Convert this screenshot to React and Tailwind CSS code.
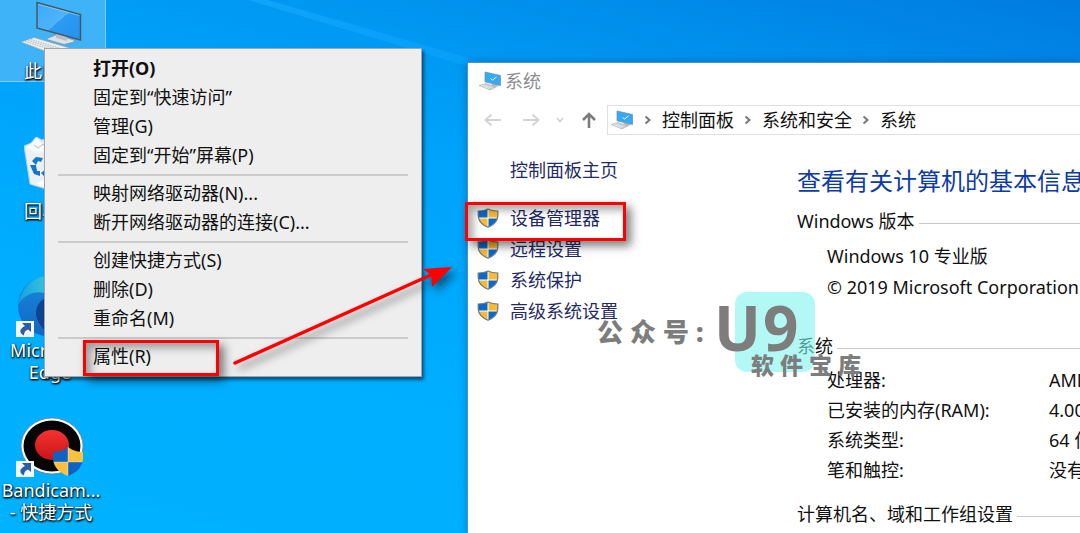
import React from "react";

const MENU = [
  ["打开(O)", "固定到“快速访问”", "管理(G)", "固定到“开始”屏幕(P)"],
  ["映射网络驱动器(N)...", "断开网络驱动器的连接(C)..."],
  ["创建快捷方式(S)", "删除(D)", "重命名(M)"],
  ["属性(R)"],
];

const TASKS = ["设备管理器", "远程设置", "系统保护", "高级系统设置"];

const SPECS = [
  ["处理器:", "AMD Ryzen"],
  ["已安装的内存(RAM):", "4.00 GB"],
  ["系统类型:", "64 位操作系统"],
  ["笔和触控:", "没有可用于此显示器的笔或触控输入"],
];

function Shield({ className }) {
  return (
    <svg viewBox="0 0 22 20" preserveAspectRatio="none" className={className} aria-hidden="true">
      <defs>
        <clipPath id="shield-shape">
          <path d="M11 1C8 2.600 4.500 3 1.200 3V8C1.500 13.500 5.500 17 11 19.200C16.500 17 20.500 13.500 20.800 8V3C17.500 3 14 2.600 11 1Z" />
        </clipPath>
      </defs>
      <g clipPath="url(#shield-shape)">
        <rect width="11" height="10" fill="#0a69c9" />
        <rect x="11" width="11" height="10" fill="#fdb932" />
        <rect y="10" width="11" height="10" fill="#fdb932" />
        <rect x="11" y="10" width="11" height="10" fill="#0a69c9" />
        <path d="M11 0V20M0 10H22" stroke="#fff" strokeWidth="1" />
      </g>
      <path d="M11 1C8 2.600 4.500 3 1.200 3V8C1.500 13.500 5.500 17 11 19.200C16.500 17 20.500 13.500 20.800 8V3C17.500 3 14 2.600 11 1Z" fill="none" stroke="#6d7a80" strokeWidth="1.200" />
    </svg>
  );
}

function LargeShield({ className }) {
  return (
    <svg viewBox="0 0 32 30" className={className} aria-hidden="true">
      <defs>
        <clipPath id="large-shield-shape">
          <path d="M16 0C11 4 6 5 1 5V12C2 21 8 26 16 29C24 26 30 21 31 12V5C26 5 21 4 16 0Z" />
        </clipPath>
      </defs>
      <g clipPath="url(#large-shield-shape)">
        <rect width="16" height="15" fill="#0f62c4" />
        <rect x="16" width="16" height="15" fill="#fcc13f" />
        <rect y="15" width="16" height="15" fill="#fcc13f" />
        <rect x="16" y="15" width="16" height="15" fill="#0f62c4" />
        <path d="M16 0V30M0 15H32" stroke="#fff" strokeOpacity="0.500" strokeWidth="0.700" />
      </g>
    </svg>
  );
}

function SmallComputer({ className }) {
  return (
    <svg viewBox="0 0 24 20" className={className} aria-hidden="true">
      <path d="M1 14.500L8 12.500L18 16L12 19Z" fill="#c9ced3" stroke="#a9b0b6" strokeWidth="0.600" />
      <path d="M3 14.500L11 17.500M5 13.800L13.500 16.800" stroke="#eef1f3" strokeWidth="0.700" />
      <path d="M13 13L17 12.500L21 15L16 16.500Z" fill="#b4bac0" />
      <path d="M7 1L22.500 4.500V14.500L7 10.800Z" fill="#35a9f4" stroke="#6d96b3" strokeWidth="0.800" />
      <path d="M12.500 7.500L14.500 9L18.500 6" fill="none" stroke="#e8f7ff" strokeWidth="1" />
    </svg>
  );
}

function DesktopComputer({ className }) {
  return (
    <svg viewBox="0 0 64 52" className={className} aria-hidden="true">
      <defs>
        <linearGradient id="screen" x1="0" y1="0" x2="1" y2="1">
          <stop stopColor="#3aa9fa" />
          <stop offset="0.500" stopColor="#4fb4fb" />
          <stop offset="0.500" stopColor="#2c9bf3" />
          <stop offset="1" stopColor="#2391ee" />
        </linearGradient>
      </defs>
      <path d="M1 42L14 37.500L53 49L50 53H30Z" fill="#eceeef" stroke="#9aa1a6" strokeWidth="0.600" />
      <path d="M5 41.500L38 51.500M8 40.500L43 51M11 39.500L47 50.500" stroke="#b4babf" strokeWidth="1" strokeDasharray="1.500 1" />
      <path d="M27 38.500L36 35L54 40V42L44 44.500L27 39.500Z" fill="#dde1e4" stroke="#7f898f" strokeWidth="0.600" />
      <path d="M36 33L47 36V41L36 38Z" fill="#b8c0c5" />
      <path d="M17 2.500L60.500 14.500V40L17 28Z" fill="url(#screen)" stroke="#475a64" strokeWidth="1.500" />
      <path d="M18.300 4.300L59.200 15.500" stroke="#9ad4fb" strokeWidth="0.600" />
    </svg>
  );
}

function RecycleBin({ className }) {
  return (
    <svg viewBox="0 0 50 54" className={className} aria-hidden="true">
      <path d="M0 9L7 6L12 0L18 3L26 0L36 5L49 8L43 49L25 53L6 47Z" fill="#dfe8ee" stroke="#b9cfdf" />
      <path d="M2 10L8 6L13 0L17 6L24 3V14L12 17Z" fill="#f8fafb" />
      <path d="M10 8L14 11L19 7L23 12" fill="none" stroke="#c9d2d8" strokeWidth="1.200" />
      <path d="M1 10L12 14L24 15V52L7 47Z" fill="#eef3f6" opacity="0.700" />
      <path d="M12 46L24 41V52Z" fill="#fff" />
      <g fill="#1576d0">
        <path d="M8 24L12 20L19 21L17 25L14 24L12 28Z" />
        <path d="M6 28L12 28L13 34L16 34V39L10 37Z" />
        <path d="M17 36L22 32V34H27V39H22V41Z" />
      </g>
    </svg>
  );
}

function EdgeLogo({ className }) {
  return (
    <svg viewBox="0 0 64 64" className={className} aria-hidden="true">
      <defs>
        <linearGradient id="edge-top" x2="1">
          <stop stopColor="#189fe4" />
          <stop offset="0.500" stopColor="#36c5dc" />
          <stop offset="1" stopColor="#46dfa2" />
        </linearGradient>
        <linearGradient id="edge-body" y2="1" x2="0">
          <stop stopColor="#1b87dd" />
          <stop offset="1" stopColor="#0f68c2" />
        </linearGradient>
      </defs>
      <circle cx="32" cy="32" r="31" fill="url(#edge-body)" />
      <path d="M1 31C5 12 17 1 32 1C50 1 63 14 63 30H40C35 13 10 14 1 31Z" fill="url(#edge-top)" />
      <path d="M32 23C15 28 15 51 36 62C48 62 57 54 59 48C42 52 29 42 32 23Z" fill="#10438f" />
    </svg>
  );
}

function BandicamLogo({ className }) {
  return (
    <svg viewBox="0 0 64 58" className={className} aria-hidden="true">
      <defs>
        <linearGradient id="record" y2="1" x2="0">
          <stop stopColor="#f6322f" />
          <stop offset="1" stopColor="#c91418" />
        </linearGradient>
      </defs>
      <ellipse cx="32" cy="29" rx="31" ry="28" fill="#fff" stroke="#6e7e88" strokeWidth="0.800" />
      <ellipse cx="32" cy="29" rx="28.500" ry="25.500" fill="#050505" />
      <ellipse cx="32" cy="28" rx="17" ry="15" fill="url(#record)" />
    </svg>
  );
}

function ShortcutArrow() {
  return (
    <svg viewBox="0 0 18 16" className="absolute bottom-0 left-0 h-4 w-[18px]" aria-hidden="true">
      <rect width="18" height="16" fill="#f4f6f8" />
      <path d="M6 2H15V11L12 8.500C9 9.500 8 11.500 8 14.500C2.500 12 3.500 7.500 9 5Z" fill="#2b5da8" />
    </svg>
  );
}

function Desktop() {
  const label = "text-lg leading-[22px] text-white [text-shadow:1px_1px_2px_#000,0_1px_2px_#000]";
  return (
    <div className="absolute inset-y-0 left-0 w-[106px]">
      <div className="absolute top-0 left-0 h-[82px] w-full border-r border-b border-[#83cdfb] bg-[#3fb3f8]" />
      <DesktopComputer className="absolute top-0 left-5 h-[52px] w-16" />
      <div className={`absolute top-[60px] left-6 whitespace-nowrap ${label}`}>此电脑</div>
      <RecycleBin className="absolute top-[137px] left-6 h-[54px] w-[50px]" />
      <div className={`absolute top-[200px] left-6 whitespace-nowrap ${label}`}>回收站</div>
      <div className="absolute top-[275px] left-4 h-[62px] w-16">
        <EdgeLogo className="h-[62px] w-16" />
        <ShortcutArrow />
      </div>
      <div className={`absolute top-[339px] left-0 w-[100px] text-center ${label}`}>Microsoft<br />Edge</div>
      <div className="absolute top-[417px] left-4 h-[60px] w-[68px]">
        <BandicamLogo className="ml-1 h-[58px] w-16" />
        <ShortcutArrow />
        <LargeShield className="absolute right-0 bottom-0 h-[30px] w-8" />
      </div>
      <div className={`absolute top-[479px] left-0 w-[102px] text-center ${label}`}>Bandicam...<br />- 快捷方式</div>
    </div>
  );
}

function ContextMenu() {
  return (
    <div role="menu" className="absolute top-[48px] left-11 w-[378px] border border-[#a5a5a5] bg-[#eeeeee] py-[5px] shadow-[2px_3px_3px_rgba(0,0,0,0.5)]">
      {MENU.map((group, g) => (
        <div key={g} className={g > 0 ? "relative pt-[9px] before:absolute before:top-1 before:right-[13px] before:left-[13px] before:h-[2px] before:bg-[#cbcbcb]" : ""}>
          {group.map((item) => (
            <button
              key={item}
              role="menuitem"
              className={`block h-[29px] w-full pl-12 text-left text-lg leading-[29px] text-[#111] ${item === "打开(O)" ? "font-bold" : ""}`}
            >
              {item}
            </button>
          ))}
        </div>
      ))}
    </div>
  );
}

function Chevron() {
  return (
    <svg viewBox="0 0 8 10" className="h-[10px] w-2 shrink-0" aria-hidden="true">
      <path d="M1.500 1.500L5.500 5L1.500 8.500" fill="none" stroke="#777" strokeWidth="2" />
    </svg>
  );
}

function Legend({ children }) {
  return (
    <h2 className="flex h-[30px] items-center gap-1 whitespace-nowrap">
      {children}
      <span className="mt-1 h-px flex-1 bg-[#c8c8c8]" />
    </h2>
  );
}

function SystemWindow() {
  return (
    <section className="absolute inset-y-0 top-[62px] right-0 left-[467px] flex flex-col overflow-hidden border-t border-l border-[#4b93c4] bg-white text-lg text-[#111] shadow-[0_0_8px_rgba(0,60,120,0.4)]">
      <header className="flex h-9 items-center gap-[3px] pl-[10px] text-[#8d8d8d]">
        <SmallComputer className="h-5 w-6" />
        系统
      </header>
      <nav className="flex h-[42px] items-center">
        <div className="flex w-[139px] shrink-0 items-center pl-4">
          <button aria-label="后退" className="w-[38px]">
            <svg viewBox="0 0 18 14" className="h-[14px] w-[18px]"><path d="M17 7H2M7.500 1.500L1.500 7L7.500 12.500" fill="none" stroke="#d4d4d4" strokeWidth="1.800" /></svg>
          </button>
          <button aria-label="前进" className="w-[34px]">
            <svg viewBox="0 0 18 14" className="h-[14px] w-[18px]"><path d="M1 7H16M10.500 1.500L16.500 7L10.500 12.500" fill="none" stroke="#d4d4d4" strokeWidth="1.800" /></svg>
          </button>
          <button aria-label="最近位置" className="w-[26px]">
            <svg viewBox="0 0 8 6" className="h-[6px] w-2"><path d="M1 1L4 4.500L7 1" fill="none" stroke="#cfcfcf" strokeWidth="1.500" /></svg>
          </button>
          <button aria-label="上移">
            <svg viewBox="0 0 14 16" className="h-4 w-[14px]"><path d="M7 16V2M1 8L7 2L13 8" fill="none" stroke="#7c7c7c" strokeWidth="2.600" /></svg>
          </button>
        </div>
        <div className="flex h-[30px] flex-1 items-center gap-[10px] border-y border-l border-[#e0e0e0] pl-[2px] whitespace-nowrap">
          <SmallComputer className="h-5 w-6" />
          <Chevron />
          <a href="#panel">控制面板</a>
          <Chevron />
          <a href="#security">系统和安全</a>
          <Chevron />
          <a href="#system">系统</a>
        </div>
      </nav>
      <div className="flex flex-1">
        <aside className="w-[329px] shrink-0 pt-[13px] text-[#1f2a66]">
          <a href="#home" className="ml-[42px] block h-8 leading-8">控制面板主页</a>
          <ul className="mt-4">
            {TASKS.map((task) => (
              <li key={task}>
                <a href="#task" className="flex h-[31px] items-center gap-[11px] pl-[9px]">
                  <Shield className="h-5 w-[22px]" />
                  {task}
                </a>
              </li>
            ))}
          </ul>
        </aside>
        <main className="min-w-0 flex-1 whitespace-nowrap">
          <h1 className="pt-[22px] text-2xl leading-9 text-[#0c3ba5]">查看有关计算机的基本信息</h1>
          <div className="pt-[7px]">
            <Legend>Windows 版本</Legend>
            <div className="pt-[5px] pl-[30px] leading-[31px]">
              <p>Windows 10 专业版</p>
              <p>© 2019 Microsoft Corporation</p>
            </div>
          </div>
          <div className="pt-7">
            <Legend>系统</Legend>
            <dl className="grid grid-cols-[222px_1fr] pt-1 pl-[30px] leading-[30px]">
              {SPECS.map(([name, value]) => (
                <React.Fragment key={name}>
                  <dt>{name}</dt>
                  <dd>{value}</dd>
                </React.Fragment>
              ))}
            </dl>
          </div>
          <div className="pt-[14px]">
            <Legend>计算机名、域和工作组设置</Legend>
          </div>
        </main>
      </div>
    </section>
  );
}

function Annotations() {
  const box = "absolute border-[3px] border-[#ff0000] shadow-[5px_5px_9px_rgba(0,0,0,0.5),inset_5px_5px_9px_rgba(0,0,0,0.35)]";
  return (
    <div className="pointer-events-none absolute inset-0">
      <div className={`${box} top-[340px] left-[83px] h-9 w-[136px]`} />
      <div className={`${box} top-[202px] left-[465px] h-[39px] w-[161px]`} />
      <svg viewBox="0 0 240 120" className="absolute top-[257px] left-[225px] h-[120px] w-60 drop-shadow-[5px_5px_4px_rgba(0,0,0,0.5)]" aria-hidden="true">
        <path d="M10 106L208 17" stroke="#f00" strokeWidth="3.500" strokeLinecap="round" />
        <path d="M227 10L198 12L206 18L207 30Z" fill="#f00" />
      </svg>
    </div>
  );
}

function Watermark() {
  return (
    <div className="pointer-events-none absolute top-[292px] left-[597px] h-[88px] w-[264px] font-bold whitespace-nowrap text-[#7d7d7d]">
      <div className="absolute top-0 left-[138px] h-20 w-20 rounded-xl bg-[#7ff5ef]/60" />
      <div className="absolute top-6 left-0 flex gap-[7px] text-[26px] leading-8 font-black">
        <span>公</span>
        <span>众</span>
        <span>号</span>
        <span>:</span>
      </div>
      <div className="absolute top-1 left-[117px] flex gap-[2px] font-['Noto_Sans','Open_Sans',sans-serif] text-[62px] leading-[62px] font-bold">
        <span>U</span>
        <span>9</span>
      </div>
      <div className="absolute top-[59px] left-[154px] flex gap-[6px] text-[23px] leading-7 font-black">
        <span>软</span>
        <span>件</span>
        <span>宝</span>
        <span>库</span>
      </div>
    </div>
  );
}

function Wallpaper() {
  return (
    <div className="absolute inset-0 bg-[linear-gradient(15deg,#00b2ff_0%,#00aeff_30%,#00a3fa_60%,#0094ef_78%,#007bdf_100%)]">
      <svg viewBox="0 0 340 70" className="absolute top-0 left-60 h-[70px] w-[340px]" aria-hidden="true">
        <defs>
          <linearGradient id="beam" x2="1">
            <stop stopColor="#18acff" stopOpacity="0.600" />
            <stop offset="1" stopColor="#0aa4ff" stopOpacity="0.500" />
          </linearGradient>
        </defs>
        <path d="M8 0H28L270 70H240Z" fill="url(#beam)" />
      </svg>
    </div>
  );
}

export default function App() {
  return (
    <div
      lang="zh-CN"
      className="relative min-h-screen overflow-hidden font-['Noto_Sans','Noto_Sans_CJK_SC',sans-serif]"
    >
      <Wallpaper />
      <Desktop />
      <SystemWindow />
      <ContextMenu />
      <Watermark />
      <Annotations />
    </div>
  );
}
